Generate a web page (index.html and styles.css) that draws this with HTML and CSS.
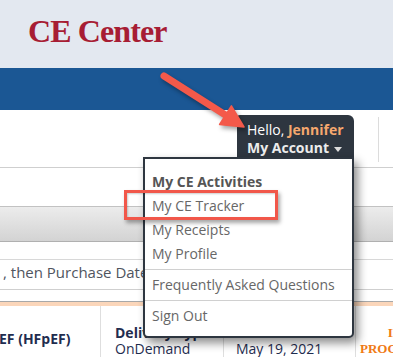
FILE: index.html
```html
<!DOCTYPE html>
<html lang="en">
<head>
<meta charset="utf-8">
<title>CE Center</title>
<link rel="stylesheet" href="styles.css">
</head>
<body>
<div class="page">
  <header class="brand"><h1 class="brand-title">CE Center</h1></header>
  <nav class="navbar"></nav>
  <div class="account-row">
    <div class="account">
      <div class="hello">Hello, <b class="name">Jennifer</b></div>
      <div class="acct-label">My Account <span class="caret"></span></div>
      <div class="dropdown">
        <div class="dd-item dd-head">My CE Activities</div>
        <a class="dd-item">My CE Tracker</a>
        <a class="dd-item">My Receipts</a>
        <a class="dd-item">My Profile</a>
        <div class="dd-sep"></div>
        <a class="dd-item">Frequently Asked Questions</a>
        <div class="dd-sep"></div>
        <a class="dd-item">Sign Out</a>
      </div>
    </div>
    <div class="vsep"></div>
  </div>
  <div class="blank1"></div>
  <div class="band"></div>
  <div class="blank2"></div>
  <div class="sort-row">, then Purchase Date</div>
  <div class="blank3"></div>
  <div class="accent"></div>
  <div class="row">
    <div class="cell c1"><b>EF (HFpEF)</b></div>
    <div class="cell c2"><b>Delivery Type:</b><br>OnDemand</div>
    <div class="cell c3"><b>Purchase Date:</b><br>May 19, 2021</div>
    <div class="cell c4">IN<br>PROGRESS</div>
  </div>
  <div class="annot">
    <svg class="arrow" width="393" height="357" viewBox="0 0 393 357">
      <line x1="164" y1="76" x2="227" y2="116" stroke="#f4594a" stroke-width="7" stroke-linecap="round"/>
      <polygon points="244,127 219.6,124.5 231.4,105.9" fill="#f4594a" stroke="#f4594a" stroke-width="1.5" stroke-linejoin="round"/>
    </svg>
    <div class="highlight"></div>
  </div>
</div>
</body>
</html>
```
FILE: styles.css
```css
html, body {
  margin: 0;
  padding: 0;
  background: #fff;
}
.page {
  position: relative;
  width: 393px;
  height: 357px;
  overflow: hidden;
  font-family: "Open Sans", sans-serif;
}
.brand {
  height: 68px;
  box-sizing: border-box;
  padding: 15px 0 0 28px;
  background: #e3e8f0;
}
.brand-title {
  margin: 0;
  font: bold 32px/32px "Liberation Serif", serif;
  letter-spacing: -0.9px;
  color: #a71d34;
}
.navbar {
  height: 42px;
  background: #1b5794;
}
.account-row {
  height: 58px;
  box-sizing: border-box;
  border-bottom: 1px solid #cfcfcf;
  display: flex;
  justify-content: flex-end;
  align-items: flex-start;
  position: relative;
  z-index: 3;
}
.account {
  position: relative;
  margin-top: 5px;
  width: 117px;
  height: 43px;
  box-sizing: border-box;
  padding: 6px 0 0 10px;
  background: #2e3640;
  border-radius: 3px 6px 0 0;
  color: #fff;
  font-size: 14px;
  line-height: 18px;
}
.name {
  color: #f6a86e;
  font-weight: 700;
}
.acct-label {
  font-weight: 700;
  color: #ececec;
}
.caret {
  display: inline-block;
  width: 0;
  height: 0;
  border-left: 4px solid transparent;
  border-right: 4px solid transparent;
  border-top: 5px solid #dddddd;
  vertical-align: middle;
  margin-left: 1px;
}
.vsep {
  width: 1px;
  height: 45px;
  margin: 7px 14px 0 24px;
  background: #dcdcdc;
}
.dropdown {
  position: absolute;
  top: 42px;
  right: 0;
  width: 211px;
  box-sizing: border-box;
  border: 2px solid #2e3640;
  border-radius: 0 0 5px 5px;
  background: #fff;
  padding: 11px 0 8px;
  box-shadow: 4px 5px 10px rgba(0, 0, 0, 0.45);
}
.dd-item {
  display: block;
  padding-left: 7px;
  font-size: 14px;
  line-height: 24px;
  color: #676767;
  font-weight: 400;
}
.dd-head {
  font-weight: 700;
  color: #555;
}
.dd-sep {
  height: 1px;
  background: #d0d0d0;
  margin: 3px 0;
}
.blank1 {
  height: 38px;
}
.band {
  height: 36px;
  box-sizing: border-box;
  border-top: 1px solid #c2c2c2;
  border-bottom: 1px solid #b0b0b0;
  background: linear-gradient(#ececec, #d3d3d3);
}
.blank2 {
  height: 17px;
}
.sort-row {
  height: 31px;
  box-sizing: border-box;
  border-top: 1px solid #d8d8d8;
  border-bottom: 1px solid #cfcfcf;
  padding: 1px 0 0 3px;
  font-size: 15px;
  line-height: 22px;
  color: #505560;
}
.blank3 {
  height: 11px;
}
.accent {
  height: 5px;
  box-sizing: border-box;
  border-top: 1px solid #a8a8a8;
  background: #fbd6ba;
}
.row {
  display: flex;
  height: 60px;
}
.cell {
  flex: 0 0 auto;
  box-sizing: border-box;
  border-right: 1px solid #dedede;
  padding-top: 19px;
  font-size: 14px;
  line-height: 16px;
  color: #1f2d4f;
  white-space: nowrap;
}
.c1 {
  width: 101px;
  padding-top: 25px;
  text-indent: -1px;
}
.c2 {
  width: 123px;
  padding-left: 14px;
}
.c3 {
  width: 132px;
  padding-left: 12px;
}
.c4 {
  width: 78px;
  border-right: none;
  text-align: center;
  font: bold 13px/16px "Liberation Serif", serif;
  padding-top: 19px;
  color: #f07a14;
}
.annot {
  position: absolute;
  left: 0;
  top: 0;
  width: 393px;
  height: 357px;
  pointer-events: none;
  z-index: 5;
}
.arrow {
  position: absolute;
  left: 0;
  top: 0;
  filter: drop-shadow(2px 3px 2px rgba(0, 0, 0, 0.35));
}
.highlight {
  position: absolute;
  left: 124px;
  top: 190px;
  width: 154px;
  height: 30px;
  box-sizing: border-box;
  border: 3px solid #f1574a;
  box-shadow: 2px 3px 4px rgba(0, 0, 0, 0.35), inset 1px 1px 2px rgba(0, 0, 0, 0.2);
}
```
